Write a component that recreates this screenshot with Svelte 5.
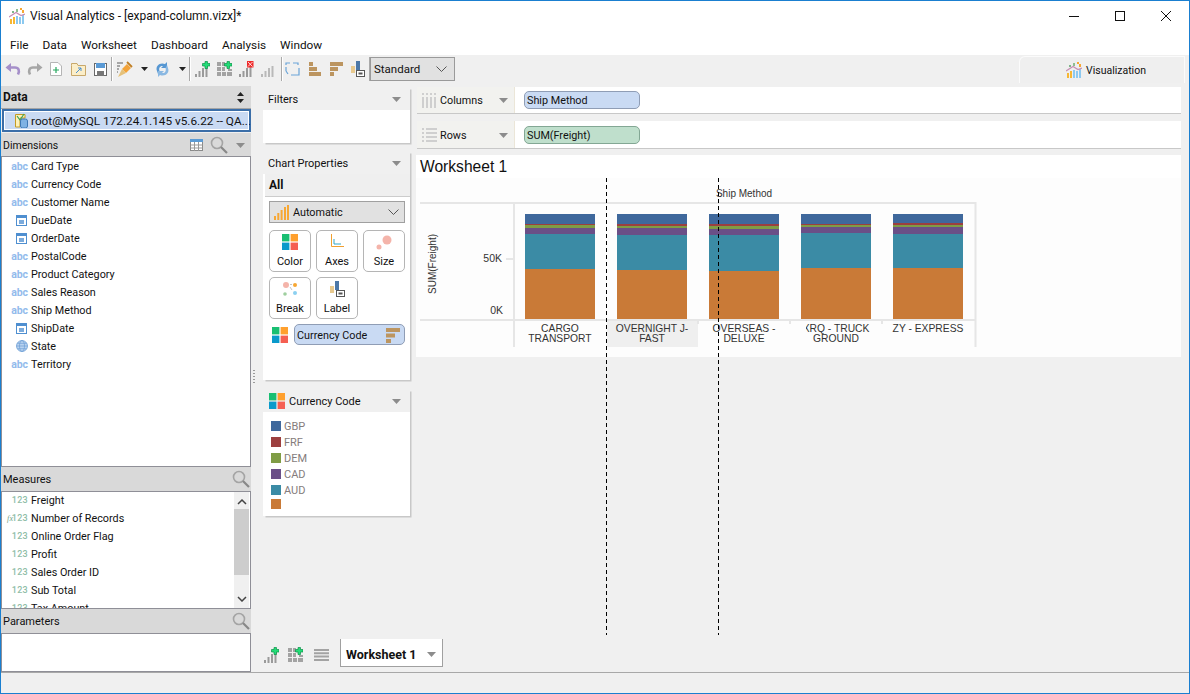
<script>
  const menu = ['File', 'Data', 'Worksheet', 'Dashboard', 'Analysis', 'Window'];
  const dims = [
    ['abc', 'Card Type'], ['abc', 'Currency Code'], ['abc', 'Customer Name'], ['date', 'DueDate'],
    ['date', 'OrderDate'], ['abc', 'PostalCode'], ['abc', 'Product Category'], ['abc', 'Sales Reason'],
    ['abc', 'Ship Method'], ['date', 'ShipDate'], ['geo', 'State'], ['abc', 'Territory']
  ];
  const measures = ['Freight', 'Number of Records', 'Online Order Flag', 'Profit', 'Sales Order ID', 'Sub Total', 'Tax Amount'];
  const colors = { blue: '#3f689c', red: '#9c3f3f', green: '#7f9c45', purple: '#6a4f87', teal: '#3b8ba5', orange: '#c97a37' };
  const legend = [['GBP', colors.blue], ['FRF', colors.red], ['DEM', colors.green], ['CAD', colors.purple], ['AUD', colors.teal], ['', colors.orange]];
  const order = [colors.blue, colors.red, colors.green, colors.purple, colors.teal, colors.orange];
  const bars = [
    { x: 525, ys: [214, 224, 225, 228, 234, 269, 319], label: ['CARGO', 'TRANSPORT'] },
    { x: 617, ys: [214, 224, 226, 228, 235, 270, 319], label: ['OVERNIGHT J-', 'FAST'] },
    { x: 709, ys: [214, 224, 226, 229, 235, 271, 319], label: ['OVERSEAS -', 'DELUXE'] },
    { x: 801, ys: [214, 224, 225, 227, 233, 268, 319], label: ['XRQ - TRUCK', 'GROUND'] },
    { x: 893, ys: [214, 223, 225, 227, 234, 268, 319], label: ['ZY - EXPRESS'] }
  ];
  const buttons1 = ['Color', 'Axes', 'Size'];
  const buttons2 = ['Break', 'Label'];
</script>

{#snippet four(size)}
  <svg class="nf" width={size} height={size} viewBox="0 0 16 16">
    <rect width="7.4" height="7.4" fill="#19bf72"/><rect x="8.6" width="7.4" height="7.4" fill="#ffa02e"/>
    <rect y="8.6" width="7.4" height="7.4" fill="#0a9acb"/><rect x="8.6" y="8.6" width="7.4" height="7.4" fill="#f55f52"/>
  </svg>
{/snippet}

{#snippet logo()}
  <svg width="16" height="16" viewBox="0 0 16 16">
    <rect x="1" y="11" width="2" height="5" fill="#f7b733"/><rect x="4" y="9" width="2" height="7" fill="#f7b733"/>
    <rect x="7" y="8" width="2" height="8" fill="#8cc9f0"/><rect x="10" y="9" width="2" height="7" fill="#8cc9f0"/><rect x="13" y="7" width="2" height="9" fill="#8cc9f0"/>
    <rect x="3" y="3" width="2" height="2" fill="#7fb58a"/><rect x="7" y="1" width="2" height="3" fill="#8fbf90"/><rect x="11" y="0" width="2" height="2" fill="#f7a733"/><rect x="13" y="2" width="2" height="3" fill="#f7a733"/>
    <path d="M0 9 L7 4.5 L12 7.5 L16 6" fill="none" stroke="#c78fb5" stroke-width="1.3"/>
  </svg>
{/snippet}

{#snippet caret()}
  <svg class="nf" width="9" height="5" viewBox="0 0 9 5"><path d="M0 0H9L4.5 5Z" fill="#8c8c8c"/></svg>
{/snippet}

{#snippet search()}
  <svg class="nf" width="18" height="18" viewBox="0 0 18 18"><circle cx="7" cy="7" r="5.5" fill="none" stroke="#a4a4a4" stroke-width="1.6"/><path d="M11 11L17 17" stroke="#888" stroke-width="2.2"/></svg>
{/snippet}

{#snippet barsIcon(color, plus)}
  <svg width="15" height="16" viewBox="0 0 15 16">
    <rect x="0" y="13" width="2" height="3" fill={color}/><rect x="3.5" y="10" width="2" height="6" fill={color}/><rect x="7" y="7" width="2" height="9" fill={color}/><rect x="10.5" y="5" width="2" height="11" fill={color}/>
    {#if plus === 'green'}
      <path d="M7.500 2.500h2.500V.5h2.500v2H15v2.500h-2.500v2.500H10V5H7.500Z" fill="#22dd77" stroke="#0c8f48" stroke-width=".7"/>
    {/if}
    {#if plus === 'red'}
      <rect x="8" y="0" width="6.500" height="6.500" fill="#ef2b2b"/><path d="M9 1l4.500 4.500M13.500 1L9 5.500" stroke="#fff" stroke-width=".8"/>
    {/if}
  </svg>
{/snippet}

{#snippet gridIcon()}
  <svg width="15" height="16" viewBox="0 0 15 16">
    <g fill="#a3a3a3"><rect x="0" y="1" width="4" height="4"/><rect x="5" y="1" width="3" height="4"/><rect x="0" y="6" width="4" height="4"/><rect x="5" y="6" width="3" height="4"/><rect x="11" y="8" width="4" height="2"/><rect x="0" y="11" width="4" height="4"/><rect x="5" y="11" width="4" height="4"/><rect x="10" y="11" width="5" height="4"/></g>
    <path d="M7.500 2.500h2.500V.5h2.500v2H15v2.500h-2.500v2.500H10V5H7.500Z" fill="#22dd77" stroke="#0c8f48" stroke-width=".7"/>
  </svg>
{/snippet}

{#snippet dateIcon()}
  <svg class="nf di" width="11" height="11" viewBox="0 0 11 11"><rect x=".5" y=".5" width="10" height="10" fill="#fff" stroke="#4f8fd0"/><rect width="11" height="3" fill="#4f8fd0"/><rect x="3" y="5" width="5" height="4" fill="#4f8fd0" opacity=".75"/></svg>
{/snippet}

{#snippet globeIcon()}
  <svg class="nf" width="12" height="12" viewBox="0 0 12 12"><circle cx="6" cy="6" r="5.500" fill="#b9d3f0" stroke="#6e9fd6" stroke-width=".8"/><ellipse cx="6" cy="6" rx="2.500" ry="5.500" fill="none" stroke="#6e9fd6" stroke-width=".7"/><path d="M.5 6h11M1.300 3.300h9.400M1.300 8.700h9.400" stroke="#6e9fd6" stroke-width=".7"/></svg>
{/snippet}

{#snippet sortIcon()}
  <svg class="nf" width="15" height="16" viewBox="0 0 15 16"><rect x="1" y="1" width="14" height="4" fill="#bc9560"/><rect x="1" y="6.500" width="9" height="4" fill="#bc9560"/><rect x="1" y="12" width="5" height="4" fill="#bc9560"/></svg>
{/snippet}

{#snippet barsAuto()}
  <svg class="nf" width="15" height="15" viewBox="0 0 15 15"><g fill="#f7a733"><rect x="0" y="11" width="2" height="4"/><rect x="3.300" y="8" width="2" height="7"/><rect x="6.600" y="5" width="2" height="10"/><rect x="10" y="2" width="2" height="13"/><rect x="13" y="0" width="2" height="15"/></g></svg>
{/snippet}

<div class="app">
  <header class="title">
    <span class="logo">{@render logo()}</span>
    <span class="title-text">Visual Analytics - [expand-column.vizx]*</span>
    <div class="win">
      <svg width="12" height="12" viewBox="0 0 12 12"><path d="M1 6.500H11" stroke="#111"/></svg>
      <svg width="12" height="12" viewBox="0 0 12 12"><rect x="1.500" y="1.500" width="9" height="9" fill="none" stroke="#111"/></svg>
      <svg width="12" height="12" viewBox="0 0 12 12"><path d="M1 1L11 11M11 1L1 11" stroke="#111"/></svg>
    </div>
  </header>

  <nav class="menu">
    {#each menu as m}<span>{m}</span>{/each}
  </nav>

  <div class="toolbar">
    <svg class="t" width="16" height="14" viewBox="0 0 16 14"><path d="M6 1L0.500 5.500L6 10Z" fill="#a58fc9"/><path d="M4 5.500H10C13.500 5.500 15 8.500 13 12.500" fill="none" stroke="#a58fc9" stroke-width="2.600"/></svg>
    <svg class="t g6" width="16" height="14" viewBox="0 0 16 14"><path d="M10 1L15.500 5.500L10 10Z" fill="#a6a6a6"/><path d="M12 5.500H6C2.500 5.500 1 8.500 3 12.500" fill="none" stroke="#a6a6a6" stroke-width="2.600"/></svg>
    <svg class="t g7" width="12" height="14" viewBox="0 0 12 14"><path d="M.5.5H8L11.500 4V13.500H.5Z" fill="#fff" stroke="#b5b5b5"/><path d="M6 5V11M3 8H9" stroke="#27a85f" stroke-width="1.200"/></svg>
    <svg class="t g9" width="15" height="13" viewBox="0 0 15 13"><path d="M.5 2.500V.5H6L7 2.500H14.500V12.500H.5Z" fill="#fbeec9" stroke="#c8a86a"/><path d="M5 10L10 5M7 5h3v3" stroke="#4a8fd0" fill="none"/></svg>
    <svg class="t g8" width="13" height="13" viewBox="0 0 13 13"><rect x=".5" y=".5" width="12" height="12" fill="#fff" stroke="#6a6a6a"/><rect x="2" y="0" width="9" height="5" fill="#5a9ad5"/><rect x="3" y="8" width="7" height="5" fill="#777"/></svg>
    <i class="sep s1"></i>
    <svg class="t g4" width="17" height="17" viewBox="0 0 17 17"><path d="M1 2h6M1 5h3M1 8h2M1 11h1" stroke="#8d8d8d" stroke-width="1.400"/><path d="M6 8L11 3L15 7L10 12Z" fill="#f2a33a"/><path d="M6 8L10 12L2 16Z" fill="#e5c17a"/><path d="M11 1L16 6" stroke="#c07f24" stroke-width="1.800"/></svg>
    <svg class="t g8" width="7" height="4" viewBox="0 0 7 4"><path d="M0 0H7L3.500 4Z" fill="#222"/></svg>
    <svg class="t g7" width="15" height="15" viewBox="0 0 15 15"><path d="M2 9C0 4 5 0 10 2L12 0V6H6L8 4C5 3.500 3.500 6 4.500 9L3 12Z" fill="#5797d2"/><path d="M13 6C15 11 10 15 5 13L3 15V9H9L7 11C10 11.500 11.500 9 10.500 6L12 3Z" fill="#8ab8e2"/></svg>
    <svg class="t g9" width="7" height="4" viewBox="0 0 7 4"><path d="M0 0H7L3.500 4Z" fill="#222"/></svg>
    <i class="sep s3"></i>
    <span class="t g5">{@render barsIcon('#9a9a9a', 'green')}</span>
    <span class="t g7">{@render gridIcon()}</span>
    <span class="t g7">{@render barsIcon('#9a9a9a', 'red')}</span>
    <span class="t g7">{@render barsIcon('#b9b9b9', 'none')}</span>
    <i class="sep s5"></i>
    <svg class="t g3" width="15" height="15" viewBox="0 0 15 15"><path d="M1 3V1H5M1 5V9M8 1H13V3M14 6V13H6M3 12L1 9" fill="none" stroke="#6aa4d8" stroke-width="1.200"/></svg>
    <svg class="t g8" width="13" height="15" viewBox="0 0 13 15"><rect x="1" y="0" width="4" height="4" fill="#bc9560"/><rect x="1" y="5" width="8" height="4" fill="#bc9560"/><rect x="1" y="10" width="12" height="4" fill="#bc9560"/></svg>
    <svg class="t g9" width="13" height="15" viewBox="0 0 13 15"><rect x="0" y="0" width="13" height="4" fill="#bc9560"/><rect x="0" y="5" width="8" height="4" fill="#bc9560"/><rect x="0" y="10" width="4" height="4" fill="#bc9560"/></svg>
    <svg class="t g8" width="14" height="16" viewBox="0 0 14 16"><rect x="0" y="5" width="4" height="7" fill="#e8c98e"/><rect x="5" y="0" width="4" height="9" fill="#4c78a8"/><rect x="5.500" y="9.500" width="8" height="6" fill="#fff" stroke="#555"/><rect x="7.500" y="11.500" width="4" height="2" fill="#555"/></svg>
    <i class="sep s1"></i>
    <div class="std"><span>Standard</span><svg width="11" height="6" viewBox="0 0 11 6"><path d="M.5.5L5.500 5.500L10.500.5" fill="none" stroke="#555"/></svg></div>
    <div class="viz-tab"><span class="logo">{@render logo()}</span><span>Visualization</span></div>
  </div>

  <main class="main">
    <aside class="left">
      <div class="lhead data"><b>Data</b>
        <svg class="nf" width="7" height="11" viewBox="0 0 7 11"><path d="M0 4L3.500 0L7 4ZM0 7H7L3.500 11Z" fill="#222"/></svg>
      </div>
      <div class="conn">
        <svg class="nf" width="13" height="15" viewBox="0 0 13 15"><path d="M.5 1.500H10V5H5V14H.5Z" fill="#fdf1b8" stroke="#c59b24"/><path d="M2 3L5 7L9 1" fill="none" stroke="#39a35a" stroke-width="1.200"/><rect x="5.500" y="6" width="7" height="9" rx="2" fill="#7fb2e4" stroke="#3f78b5"/></svg>
        <span>root@MySQL 172.24.1.145 v5.6.22 -- QA...</span>
      </div>
      <div class="lhead dimh"><span class="grow">Dimensions</span>
        <svg class="nf tbl" width="13" height="12" viewBox="0 0 13 12"><rect x=".5" y=".5" width="12" height="11" fill="#fff" stroke="#8a8a8a"/><rect width="13" height="3" fill="#5b9bd5"/><path d="M.5 6H12.500M.5 9H12.500M4.500 3V12M8.500 3V12" stroke="#999"/></svg>
        {@render search()}
        <span class="dimcaret">{@render caret()}</span>
      </div>
      <div class="list dimlist">
        {#each dims as [t, n]}
          <div class="row">
            <span class="ic">
              {#if t === 'abc'}<span class="abc">abc</span>{:else if t === 'date'}{@render dateIcon()}{:else}{@render globeIcon()}{/if}
            </span>
            <span>{n}</span>
          </div>
        {/each}
      </div>
      <div class="lhead"><span class="grow">Measures</span><span class="sr">{@render search()}</span></div>
      <div class="list mealist">
        <div class="rows">
          {#each measures as n, i}
            <div class="row">
              <span class="ic num">{#if i === 1}<em>fx</em>{/if}123</span>
              <span>{n}</span>
            </div>
          {/each}
        </div>
        <div class="scroll">
          <svg width="10" height="6" viewBox="0 0 10 6"><path d="M1 5L5 1L9 5" fill="none" stroke="#444" stroke-width="1.500"/></svg>
          <div class="thumb"></div>
          <svg width="10" height="6" viewBox="0 0 10 6"><path d="M1 1L5 5L9 1" fill="none" stroke="#444" stroke-width="1.500"/></svg>
        </div>
      </div>
      <div class="lhead"><span class="grow">Parameters</span><span class="sr">{@render search()}</span></div>
      <div class="list parlist"></div>
    </aside>

    <div class="center">
      <div class="work">
        <div class="mid">
          <section class="card filters">
            <div class="chead"><span>Filters</span>{@render caret()}</div>
          </section>
          <section class="card props">
            <div class="chead"><span>Chart Properties</span>{@render caret()}</div>
            <div class="all">All</div>
            <div class="auto">
              {@render barsAuto()}
              <span class="grow">Automatic</span>
              <svg class="nf" width="11" height="6" viewBox="0 0 11 6"><path d="M.5.5L5.500 5.500L10.500.5" fill="none" stroke="#555"/></svg>
            </div>
            <div class="btns">
              {#each buttons1 as b}
                <div class="btn">
                  <span class="bi">
                    {#if b === 'Color'}{@render four(16)}
                    {:else if b === 'Axes'}
                      <svg width="14" height="14" viewBox="0 0 14 14"><path d="M1.500 0V12.500H14" fill="none" stroke="#f0a030"/><path d="M4 5V10H11" fill="none" stroke="#2fa7c9"/></svg>
                    {:else}
                      <svg width="16" height="16" viewBox="0 0 16 16"><circle cx="11" cy="6" r="4.500" fill="#f4b4aa"/><circle cx="3" cy="13" r="2.500" fill="#f4b4aa"/></svg>
                    {/if}
                  </span>
                  <span>{b}</span>
                </div>
              {/each}
              {#each buttons2 as b}
                <div class="btn">
                  <span class="bi">
                    {#if b === 'Break'}
                      <svg width="16" height="16" viewBox="0 0 16 16"><circle cx="4" cy="4" r="3" fill="#f4b4aa"/><circle cx="13" cy="4" r="2" fill="#f7a733"/><circle cx="3" cy="13" r="1.800" fill="#9fcf9f"/><circle cx="13" cy="12" r="2" fill="#8cd0f0"/><path d="M8 6l2 3M8 3.500h2" stroke="#aaa" stroke-width=".7"/></svg>
                    {:else}
                      <svg width="16" height="16" viewBox="0 0 16 16"><rect x="1" y="5" width="4" height="7" fill="#e8c98e"/><rect x="6" y="0" width="4" height="9" fill="#4c78a8"/><rect x="7.500" y="9.500" width="8" height="6" fill="#fff" stroke="#555"/><rect x="9.500" y="11.500" width="4" height="2" fill="#555"/></svg>
                    {/if}
                  </span>
                  <span>{b}</span>
                </div>
              {/each}
            </div>
            <div class="enc">
              {@render four(16)}
              <div class="pill-blue"><span>Currency Code</span>{@render sortIcon()}</div>
            </div>
          </section>
          <section class="card leg">
            <div class="chead">
              <span class="lt">{@render four(16)}<span>Currency Code</span></span>{@render caret()}
            </div>
            <div class="items">
              {#each legend as [t, c]}
                <div class="item"><i style:background={c}></i><span>{t}</span></div>
              {/each}
            </div>
          </section>
        </div>

        <div class="right">
          <div class="shelf">
            <div class="slabel">
              <svg class="nf" width="15" height="15" viewBox="0 0 15 15"><g fill="#cfcfcf"><rect x="0" y="4" width="2" height="11"/><rect x="4" y="4" width="2" height="11"/><rect x="8" y="4" width="2" height="11"/><rect x="12" y="4" width="2" height="11"/><rect x="0" y="0" width="2" height="2"/><rect x="4" y="0" width="2" height="2"/><rect x="8" y="0" width="2" height="2"/><rect x="12" y="0" width="2" height="2"/></g></svg>
              <span>Columns</span>{@render caret()}
            </div>
            <div class="pill blue">Ship Method</div>
          </div>
          <div class="shelf rows-shelf">
            <div class="slabel">
              <svg class="nf" width="15" height="15" viewBox="0 0 15 15"><g fill="#cfcfcf"><rect x="0" y="0" width="2" height="2"/><rect x="0" y="4" width="2" height="2"/><rect x="0" y="8" width="2" height="2"/><rect x="0" y="12" width="2" height="2"/><rect x="4" y="0" width="11" height="2"/><rect x="4" y="4" width="11" height="2"/><rect x="4" y="8" width="11" height="2"/><rect x="4" y="12" width="11" height="2"/></g></svg>
              <span>Rows</span>{@render caret()}
            </div>
            <div class="pill green">SUM(Freight)</div>
          </div>
          <section class="sheet">
            <h1>Worksheet 1</h1>
            <svg class="chart" width="765" height="179" viewBox="416 178 765 179">
              <defs><clipPath id="xrq"><rect x="806" y="320" width="80" height="30"/></clipPath></defs>
              <rect x="416" y="178" width="765" height="179" fill="#fdfdfd"/>
              <rect x="607" y="320" width="91" height="27" fill="#efefef"/>
              <g fill="#e6e6e6">
                <rect x="420" y="202" width="555" height="2"/>
                <rect x="420" y="319" width="555" height="2"/>
                <rect x="513" y="202" width="2" height="145"/>
                <rect x="974.500" y="202" width="2" height="145"/>
                <rect x="506" y="258" width="8" height="2"/>
                <rect x="697" y="321" width="2" height="3"/><rect x="789" y="321" width="2" height="3"/><rect x="881" y="321" width="2" height="3"/>
              </g>
              {#each bars as b}
                {#each order as c, i}
                  <rect x={b.x} y={b.ys[i]} width="70" height={b.ys[i + 1] - b.ys[i]} fill={c}/>
                {/each}
                <g clip-path={b.label[0].startsWith('XRQ') ? 'url(#xrq)' : undefined}>
                  {#each b.label as l, i}
                    <text class="cat" x={b.x + 35} y={332 + i * 10}>{l}</text>
                  {/each}
                </g>
              {/each}
              <text class="tx" x="744" y="197">Ship Method</text>
              <text class="ax" x="502" y="262">50K</text>
              <text class="ax" x="503" y="314">0K</text>
              <text class="tx" transform="translate(436 264) rotate(-90)">SUM(Freight)</text>
            </svg>
          </section>
        </div>
      </div>
      <div class="tabs">
        <span class="ti">{@render barsIcon('#9a9a9a', 'green')}</span>
        <span class="ti i2">{@render gridIcon()}</span>
        <svg class="ti i3" width="15" height="12" viewBox="0 0 15 12"><path d="M0 1H15M0 4.300H15M0 7.600H15M0 11H15" stroke="#a3a3a3" stroke-width="2"/></svg>
        <div class="tab"><b>Worksheet 1</b><svg class="nf" width="9" height="5" viewBox="0 0 9 5"><path d="M0 0H9L4.500 5Z" fill="#8c8c8c"/></svg></div>
      </div>
    </div>
    <div class="grip"></div>
  </main>

  <footer class="status"></footer>
  <i class="dash d1"></i>
  <i class="dash d2"></i>
</div>

<style>
  :global(body) { margin: 0; background: #f0f0f0; }
  .app {
    position: relative; width: 1190px; height: 694px; box-sizing: border-box;
    border: 1px solid #1a7fd0; background: #f0f0f0; display: flex; flex-direction: column;
    font: 12px Roboto, "Liberation Sans", sans-serif; color: #111; overflow: hidden;
  }
  :global(.nf) { flex: none; }
  .grow { flex: 1; min-width: 0; }
  .title { height: 32px; background: #fff; display: flex; align-items: center; flex: none; padding: 0 0 2px 8px; box-sizing: border-box; }
  .logo { display: flex; margin-right: 5px; }
  .title-text { font-size: 12px; }
  .win { margin-left: auto; display: flex; gap: 34px; padding-right: 17px; }
  .menu { height: 22px; background: #fff; display: flex; gap: 14px; align-items: center; padding: 1px 0 0 9px; box-sizing: border-box; flex: none; font-size: 11.800px; }
  .toolbar { height: 28px; display: flex; align-items: center; flex: none; padding-left: 4px; position: relative; }
  .t { display: flex; flex: none; }
  .g3 { margin-left: 3px; } .g4 { margin-left: 4px; } .g5 { margin-left: 5px; } .g6 { margin-left: 6px; }
  .g7 { margin-left: 7px; } .g8 { margin-left: 8px; } .g9 { margin-left: 9px; }
  .sep { width: 1px; height: 24px; background: #a9a9a9; flex: none; box-shadow: 1px 0 #fff; }
  .s1 { margin-left: 4px; } .s3 { margin-left: 3px; } .s5 { margin-left: 5px; }
  .std {
    width: 85px; height: 24px; box-sizing: border-box; margin-left: 0; border: 1px solid #9a9a9a; background: #e1e1e1;
    display: flex; align-items: center; justify-content: space-between; padding: 0 7px 0 3px; font-size: 11.500px;
  }
  .viz-tab {
    position: absolute; left: 1018px; top: 1px; width: 166px; height: 27px; box-sizing: border-box;
    border: 1px solid #fbfbfb; border-bottom: 0; border-radius: 6px 0 0 0;
    display: flex; align-items: center; font-size: 10.500px; padding-left: 46px; background: #efefef;
  }
  .viz-tab .logo { margin-right: 4px; }

  .main { flex: 1; min-height: 0; display: flex; position: relative; }
  .left { width: 250px; flex: none; display: flex; flex-direction: column; padding-top: 3px; box-sizing: border-box; }
  .lhead {
    height: 24px; flex: none; background: #d9d9d9; display: flex; align-items: center; padding: 0 0 0 2px; font-size: 11px; box-sizing: border-box;
  }
  .sr { display: flex; margin-right: 1px; }
  .data { height: 23px; font-size: 12px; padding-right: 7px; border-bottom: 1px solid #a5a5a5; justify-content: space-between; }
  .dimh { height: 23px; font-size: 10.500px; padding-top: 1px; }
  .tbl { margin-right: 7px; }
  .dimcaret { display: flex; margin: 0 6px 0 8px; }
  .conn {
    height: 23px; flex: none; margin: 0 0 1px 1px; box-sizing: border-box; border: 2px solid #3b6ea8; background: #c9daf3;
    display: flex; align-items: center; gap: 3px; padding-left: 11px; font-size: 11.800px; white-space: nowrap; width: 249px;
    outline: 1px solid #fff; outline-offset: -3px;
  }
  .list { background: #fff; border: 1px solid #8f8f97; box-sizing: border-box; flex: none; overflow: hidden; width: 250px; font-size: 10.800px; }
  .dimlist { height: 311px; }
  .mealist { height: 118px; display: flex; }
  .parlist { height: 39px; }
  .row { height: 18px; display: flex; align-items: center; white-space: nowrap; }
  .ic { width: 29px; display: flex; justify-content: flex-end; padding-right: 3px; box-sizing: border-box; flex: none; position: relative; align-items: center; }
  .di { margin-right: 1px; }
  .abc { color: #93bbec; font-weight: 700; font-size: 10.500px; letter-spacing: -.1px; }
  .num { color: #8fbda8; font-size: 9px; font-weight: 500; letter-spacing: .3px; }
  .num em { position: absolute; left: 5px; top: 1px; font: italic 8px "Liberation Serif", serif; color: #6f9f88; }
  .rows { flex: 1; min-width: 0; margin-top: -1px; }
  .scroll { width: 15px; flex: none; background: #f0f0f0; margin-right: 1px; display: flex; flex-direction: column; align-items: center; justify-content: space-between; padding: 7px 0 6px; box-sizing: border-box; position: relative; }
  .thumb { position: absolute; top: 17px; left: 0; right: 0; height: 66px; background: #cdcdcd; }
  .grip { position: absolute; left: 252px; top: 287px; width: 2px; height: 15px; background: repeating-linear-gradient(#9a9a9a 0 1px, transparent 1px 3px); }

  .center { flex: 1; min-width: 0; display: flex; flex-direction: column; }
  .work { flex: 1; min-height: 0; display: flex; padding: 4px 0 0 12px; gap: 7px; }
  .tabs { height: 34px; flex: none; display: flex; align-items: flex-start; padding-left: 13px; box-sizing: border-box; position: relative; }
  .ti { margin-top: 9px; display: flex; flex: none; }
  .i2 { margin-left: 9px; }
  .i3 { margin: 11px 0 0 11px; }
  .tab {
    margin: 1px 0 0 11px; width: 103px; height: 28px; box-sizing: border-box; background: #fff;
    border: 1px solid #a0a0a0; border-top: 0; display: flex; align-items: center; justify-content: space-between; padding: 3px 6px 0 5px; font-size: 12.500px;
  }
  .mid { width: 147px; flex: none; display: flex; flex-direction: column; gap: 8px; }
  .card { background: #fff; box-shadow: 2px 2px 0 -0.500px #c8c8c8; flex: none; }
  .filters { height: 56px; }
  .props { height: 229px; }
  .leg { height: 127px; margin-top: 1px; }
  .chead { height: 23px; background: #f0f0f0; display: flex; align-items: center; justify-content: space-between; padding: 1px 9px 0 5px; box-sizing: border-box; font-size: 11px; }
  .lt { display: flex; align-items: center; gap: 4px; margin-left: 1px; }
  .all { margin-left: 2px; height: 23px; background: #efefef; border-bottom: 1px solid #ccc; box-sizing: border-box; font-weight: 700; padding-left: 4px; display: flex; align-items: center; font-size: 12px; }
  .auto { margin: 4px 5px 0 6px; height: 22px; background: #e1e1e1; border: 1px solid #a0a0a0; box-sizing: border-box; display: flex; align-items: center; padding: 0 5px 0 4px; gap: 4px; font-size: 10.800px; }
  .btns { margin: 7px 5px 0 6px; display: grid; grid-template-columns: repeat(3, 42px); gap: 5px; }
  .btn { height: 42px; box-sizing: border-box; border: 1px solid #b5b5b5; border-radius: 5px; display: flex; flex-direction: column; align-items: center; font-size: 11px; padding: 3px 0 3px; justify-content: space-between; }
  .bi { display: flex; }
  .enc { display: flex; align-items: center; margin: 5px 5px 0 9px; gap: 6px; }
  .pill-blue { flex: 1; height: 21px; background: #c9daf3; border: 1px solid #8f9db5; border-radius: 5px; box-sizing: border-box; display: flex; align-items: center; justify-content: space-between; padding: 1px 4px 0 2px; font-size: 10.800px; }
  .items { padding: 6px 0 0 8px; }
  .item { height: 16px; display: flex; align-items: center; gap: 3px; color: #857c7c; font-size: 11px; }
  .item:last-child { margin-top: -2px; }
  .item i { width: 10px; height: 10px; flex: none; }

  .right { width: 764px; flex: none; display: flex; flex-direction: column; }
  .shelf { height: 26px; background: #fff; display: flex; align-items: center; flex: none; box-shadow: 0 1px 0 #c8c8c8; }
  .rows-shelf { height: 27px; margin-top: 8px; }
  .rows-shelf .slabel { padding-top: 1px; }
  .slabel { width: 98px; height: 100%; box-sizing: border-box; background: #f2f2ef; border-right: 1px solid #ebe6d8; display: flex; align-items: center; padding: 0 6px 0 5px; flex: none; font-size: 10.800px; }
  .slabel span { margin-left: 3px; flex: 1; }
  .pill { width: 116px; height: 18px; margin-left: 9px; box-sizing: border-box; border-radius: 5px; border: 1px solid; padding-left: 2px; display: flex; align-items: center; font-size: 10.800px; }
  .blue { background: #c9daf3; border-color: #8f9db5; }
  .green { background: #bfdfcc; border-color: #83a794; padding-top: 1px; }
  .sheet { margin: 7px 0 0 -1px; width: 765px; height: 202px; background: #fff; flex: none; }
  h1 { margin: 0; height: 23px; font: 400 15.600px/23px "Liberation Sans", sans-serif; padding-left: 4px; }
  .chart { display: block; }
  .cat { font: 10.300px "Liberation Sans", sans-serif; fill: #333; text-anchor: middle; }
  .tx { font: 10px "Liberation Sans", sans-serif; fill: #333; text-anchor: middle; }
  .ax { font: 10.500px "Liberation Sans", sans-serif; fill: #333; text-anchor: end; }
  .status { height: 21px; flex: none; border-top: 1px solid #a8a8a8; box-sizing: border-box; background: #f0f0f0; }
  .dash { position: absolute; top: 177px; height: 457px; width: 1px; background: repeating-linear-gradient(#000 0 4px, transparent 4px 7px); }
  .d1 { left: 605px; }
  .d2 { left: 717px; }
</style>
